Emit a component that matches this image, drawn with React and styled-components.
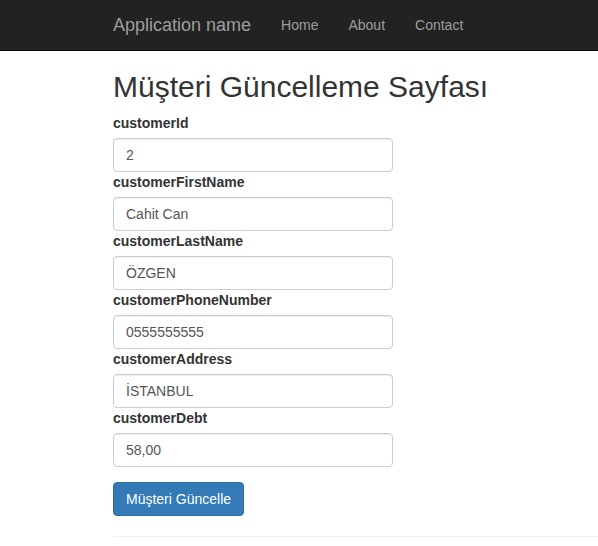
import React from "react";
import styled, { createGlobalStyle } from "styled-components";

const Global = createGlobalStyle`
  html, body { margin: 0; padding: 0; }
  body {
    font-family: "Liberation Sans", Arial, Helvetica, sans-serif;
    font-size: 14px;
    line-height: 1.42857143;
    color: #333;
    background: #fff;
  }
  * { box-sizing: border-box; }
`;

const Navbar = styled.nav`
  background: #222;
  border-bottom: 1px solid #080808;
  height: 51px;
`;

const NavInner = styled.div`
  display: flex;
  align-items: flex-start;
  padding-left: 98px;
`;

const Brand = styled.a`
  display: block;
  padding: 15px;
  height: 50px;
  font-size: 18px;
  line-height: 20px;
  color: #9d9d9d;
  text-decoration: none;
`;

const NavList = styled.ul`
  display: flex;
  list-style: none;
  margin: 0;
  padding: 0;
`;

const NavLink = styled.a`
  display: block;
  padding: 15px;
  line-height: 20px;
  color: #9d9d9d;
  text-decoration: none;
`;

const Container = styled.main`
  padding-left: 113px;
`;

const Title = styled.h2`
  font-size: 30px;
  font-weight: 500;
  line-height: 1.1;
  margin: 19px 0 10px;
  color: #333;
`;

const Form = styled.form`
  display: flex;
  flex-direction: column;
  align-items: flex-start;
`;

const Label = styled.label`
  display: block;
  font-weight: bold;
  margin-bottom: 5px;
  line-height: 20px;
`;

const Input = styled.input`
  display: block;
  width: 280px;
  height: 34px;
  padding: 6px 12px;
  font-family: inherit;
  font-size: 14px;
  line-height: 1.42857143;
  color: #555;
  background: #fff;
  border: 1px solid #ccc;
  border-radius: 4px;
  box-shadow: inset 0 1px 1px rgba(0, 0, 0, 0.075);
  outline: none;
`;

const Field = styled.div`
  display: flex;
  flex-direction: column;
`;

const Button = styled.button`
  margin-top: 15px;
  height: 34px;
  padding: 6px 12px;
  font-family: inherit;
  font-size: 14px;
  line-height: 20px;
  color: #fff;
  background: #337ab7;
  border: 1px solid #2e6da4;
  border-radius: 4px;
  cursor: pointer;
`;

const Rule = styled.hr`
  margin: 20px 0 0;
  border: 0;
  border-top: 1px solid #eee;
`;

const fields = [
  ["customerId", "2"],
  ["customerFirstName", "Cahit Can"],
  ["customerLastName", "ÖZGEN"],
  ["customerPhoneNumber", "0555555555"],
  ["customerAddress", "İSTANBUL"],
  ["customerDebt", "58,00"],
];

export default function App() {
  return (
    <>
      <Global />
      <Navbar>
        <NavInner>
          <Brand href="#">Application name</Brand>
          <NavList>
            <li><NavLink href="#">Home</NavLink></li>
            <li><NavLink href="#">About</NavLink></li>
            <li><NavLink href="#">Contact</NavLink></li>
          </NavList>
        </NavInner>
      </Navbar>
      <Container>
        <Title>Müşteri Güncelleme Sayfası</Title>
        <Form onSubmit={(e) => e.preventDefault()}>
          {fields.map(([name, value]) => (
            <Field key={name}>
              <Label htmlFor={name}>{name}</Label>
              <Input id={name} defaultValue={value} />
            </Field>
          ))}
          <Button type="submit">Müşteri Güncelle</Button>
        </Form>
        <Rule />
      </Container>
    </>
  );
}
